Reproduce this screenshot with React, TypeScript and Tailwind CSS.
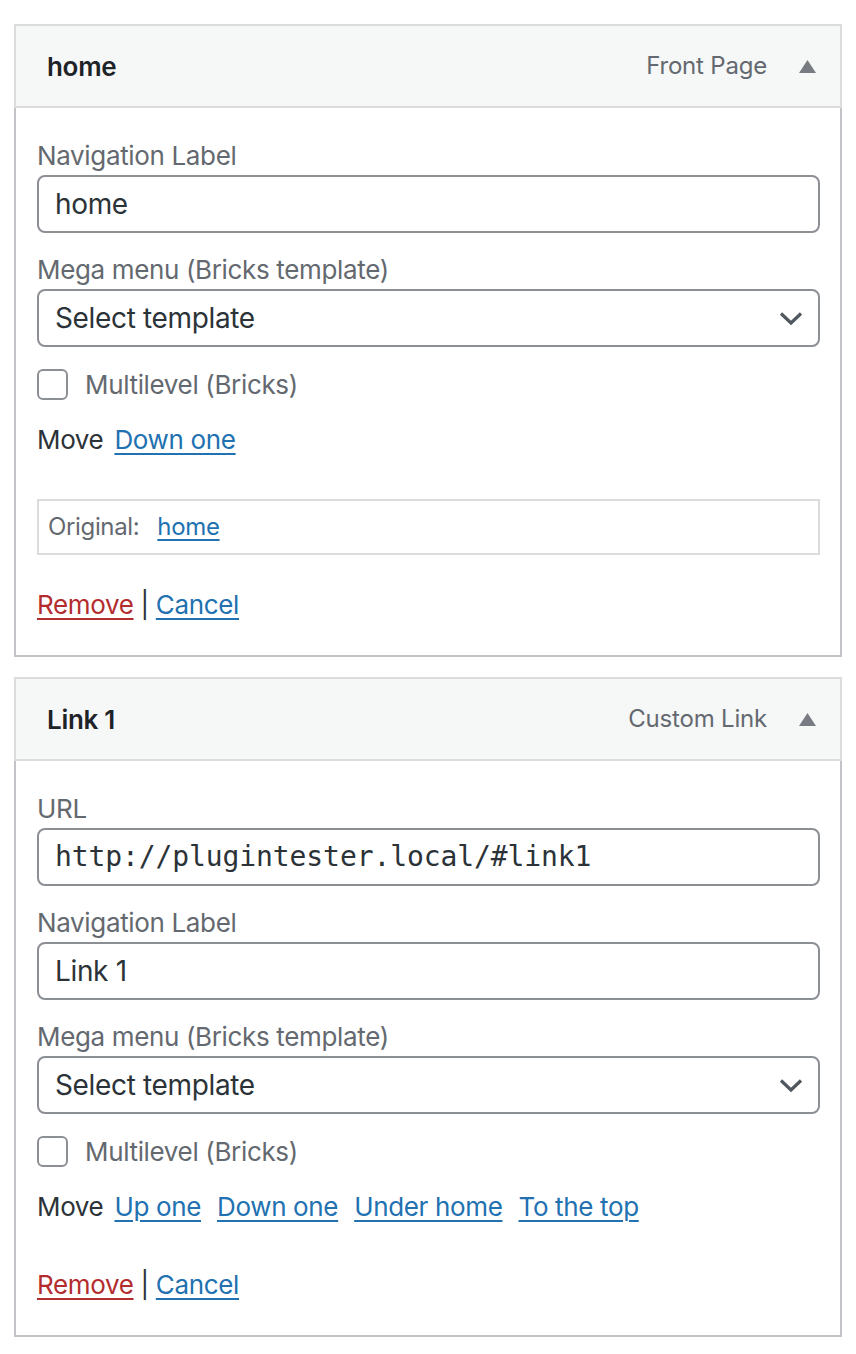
import { ReactNode } from 'react';

const blue = 'text-[#2271b1] underline decoration-2 underline-offset-[4px]';
const red = 'text-[#b32d2e] underline decoration-2 underline-offset-[4px]';

function Chevron() {
  return (
    <svg width="24" height="15" viewBox="0 0 24 15" className="shrink-0">
      <path d="M2 2.5 L12 12 L22 2.5" fill="none" stroke="#50575e" strokeWidth="3.2" />
    </svg>
  );
}

function Triangle() {
  return (
    <svg width="17" height="13" viewBox="0 0 17 13">
      <path d="M8.5 0 L17 13 L0 13 Z" fill="#787c82" />
    </svg>
  );
}

function Label({ children }: { children: ReactNode }) {
  return <div className="h-[39px] text-[26px] leading-[39px] tracking-[-0.35px] text-[#646970]">{children}</div>;
}

function TextInput({ value, mono }: { value: string; mono?: boolean }) {
  return (
    <div
      className={`flex h-[58px] items-center rounded-[8px] border-2 border-[#8c8f94] bg-white pl-[16px] text-[28px] text-[#2c3338] ${
        mono ? "font-['DejaVu_Sans_Mono',monospace] tracking-[-0.1px]" : 'tracking-[-0.35px]'
      }`}
    >
      {value}
    </div>
  );
}

function Select() {
  return (
    <div className="flex h-[58px] items-center justify-between rounded-[8px] border-2 border-[#8c8f94] bg-white pl-[16px] pr-[15px] text-[28px] tracking-[-0.35px] text-[#2c3338]">
      <span>Select template</span>
      <Chevron />
    </div>
  );
}

function Field({ label, children, first }: { label: string; children: ReactNode; first?: boolean }) {
  return (
    <div className={first ? '' : 'mt-[17px]'}>
      <Label>{label}</Label>
      {children}
    </div>
  );
}

interface Item {
  title: string;
  type: string;
  url?: string;
  label: string;
  moves: string[];
  original?: string;
}

const items: Item[] = [
  { title: 'home', type: 'Front Page', label: 'home', moves: ['Down one'], original: 'home' },
  {
    title: 'Link 1',
    type: 'Custom Link',
    url: 'http://plugintester.local/#link1',
    label: 'Link 1',
    moves: ['Up one', 'Down one', 'Under home', 'To the top'],
  },
];

function MenuItem({ item }: { item: Item }) {
  return (
    <div className="w-[828px]">
      {/* handle */}
      <div className="flex h-[84px] items-center justify-between border-2 border-[#dcdcde] bg-[#f6f7f7] pl-[31px] pr-[24px]">
        <span className="text-[26px] font-semibold tracking-[-0.3px] text-[#1d2327]">{item.title}</span>
        <div className="flex items-center gap-[32px]">
          <span className="text-[24px] tracking-[-0.2px] text-[#646970]">{item.type}</span>
          <Triangle />
        </div>
      </div>

      {/* settings */}
      <div className="border-2 border-t-0 border-[#c3c4c7] bg-white pb-[31px] pl-[21px] pr-[20px] pt-[28px] tracking-[-0.35px]">
        {item.url && (
          <Field label="URL" first>
            <TextInput value={item.url} mono />
          </Field>
        )}
        <Field label="Navigation Label" first={!item.url}>
          <TextInput value={item.label} />
        </Field>
        <Field label="Mega menu (Bricks template)">
          <Select />
        </Field>

        <div className="mt-[22px] flex h-[31px] items-center gap-[17px]">
          <div className="h-[31px] w-[31px] rounded-[6px] border-2 border-[#8c8f94] bg-white" />
          <span className="text-[26px] text-[#646970]">Multilevel (Bricks)</span>
        </div>

        <div className="mt-[20px] flex h-[39px] items-center gap-[16px] text-[26px] text-[#2c3338]">
          <span className="mr-[-5px]">Move</span>
          {item.moves.map((m) => (
            <a key={m} href="#" className={blue}>
              {m}
            </a>
          ))}
        </div>

        {item.original && (
          <div className="mt-[40px] flex h-[56px] items-center border-2 border-[#dcdcde] pl-[9px] text-[24px] text-[#646970]">
            <span>Original:</span>
            <a href="#" className={`ml-[18px] ${blue}`}>
              {item.original}
            </a>
          </div>
        )}

        <div className={`${item.original ? 'mt-[30px]' : 'mt-[39px]'} flex h-[39px] items-center text-[26px] text-[#2c3338]`}>
          <a href="#" className={red}>
            Remove
          </a>
          <span className="mx-[7px]">|</span>
          <a href="#" className={blue}>
            Cancel
          </a>
        </div>
      </div>
    </div>
  );
}

export default function App() {
  return (
    <div className="min-h-[1354px] bg-white pl-[14px] pt-[24px] font-['Inter',sans-serif]">
      <div className="flex flex-col gap-[20px]">
        {items.map((it) => (
          <MenuItem key={it.title} item={it} />
        ))}
      </div>
    </div>
  );
}
